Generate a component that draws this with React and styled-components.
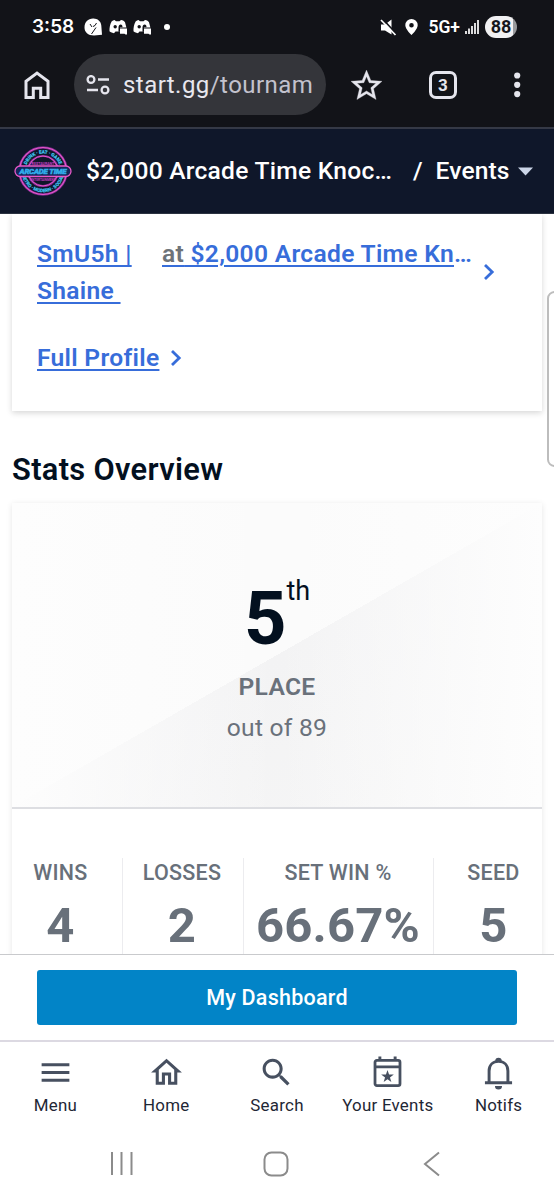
import styled, { createGlobalStyle } from "styled-components";

const GlobalStyle = createGlobalStyle`
  * {
    box-sizing: border-box;
  }
  body {
    margin: 0;
    background: #fff;
    font-family: Roboto, "Liberation Sans", sans-serif;
  }
`

const Phone = styled.div`
  width: 554px;
  height: 1200px;
  display: flex;
  flex-direction: column;
  overflow: hidden;
  background: #fff;
  svg {
    display: block;
    flex-shrink: 0;
  }
`

/* ---- phone status bar ---- */

const StatusBar = styled.div`
  height: 54px;
  padding: 0 37px 0 32px;
  display: flex;
  align-items: center;
  background: #121318;
  color: #fff;
`

const Clock = styled.span`
  width: 52px;
  font: 600 19px/24px Inter, sans-serif;
`

const StatusIcons = styled.div`
  display: flex;
  align-items: center;
  gap: 6.5px;
  flex-grow: 1;
`

const Dot = styled.span`
  width: 6px;
  height: 6px;
  margin-left: 6.5px;
  border-radius: 50%;
  background: #fff;
`

const Network = styled.span`
  margin: 0 5px 0 7px;
  font: 600 17.5px/22px Roboto, sans-serif;
`

const Battery = styled.span`
  width: 32px;
  height: 22px;
  margin-left: 6px;
  border-radius: 11px;
  background: linear-gradient(90deg, #f1f1f3 88%, #98999c 88%);
  color: #16171c;
  font: 700 18px/22px Roboto, sans-serif;
  text-align: center;
`

/* ---- browser toolbar ---- */

const Toolbar = styled.div`
  height: 75px;
  padding: 0 0 12px 23px;
  display: flex;
  align-items: center;
  background: #121318;
  border-bottom: 2px solid #353946;
`

const Address = styled.div`
  width: 252px;
  height: 61px;
  margin: 0 25px 0 23px;
  padding: 0 12px;
  display: flex;
  align-items: center;
  gap: 13px;
  border-radius: 31px;
  background: #34353a;
`

const Url = styled.div`
  flex: 1;
  overflow: hidden;
  white-space: nowrap;
  color: #c3c2cd;
  font-size: 24px;
  line-height: 32px;
  letter-spacing: 0.45px;
  > span {
    color: #e8e7ee;
  }
`

const TabCount = styled.div`
  width: 28px;
  height: 28px;
  margin: 0 57px 0 47px;
  border: 3px solid #e5e5ed;
  border-radius: 7px;
  color: #e5e5ed;
  font: 700 17px/22px Roboto, sans-serif;
  text-align: center;
`

/* ---- tournament header ---- */

const Header = styled.header`
  height: 85px;
  padding: 0 20px 0 14px;
  display: flex;
  align-items: center;
  background: #0f172a;
  border-bottom: 1px solid #2b3240;
  color: #fff;
  font-size: 24.6px;
  font-weight: 500;
  line-height: 36px;
`

const Tournament = styled.div`
  width: 309px;
  margin: 0 18px 0 14px;
  letter-spacing: 0.25px;
  white-space: nowrap;
`

const EventsMenu = styled.div`
  margin-left: 13px;
  display: flex;
  align-items: center;
  gap: 8px;
  letter-spacing: 0.1px;
`

/* ---- page ---- */

const Content = styled.main`
  flex: 1;
  min-height: 0;
  padding: 0 12px;
  position: relative;
  overflow: hidden;
`

const ProfileCard = styled.section`
  height: 197px;
  padding: 21px 25px 0;
  box-shadow: 0 2px 6px rgba(0, 0, 0, 0.16);
  color: #376dda;
  font-size: 24.6px;
  font-weight: 600;
  line-height: 37px;
  letter-spacing: 0.3px;
`

const ProfileRow = styled.div`
  display: flex;
  align-items: flex-start;
`

const ProfileLink = styled.a`
  color: #376dda;
  text-decoration: underline;
  text-decoration-thickness: 2px;
  text-underline-offset: 3px;
  white-space: pre;
`

const PlayerName = styled(ProfileLink)`
  width: 125px;
`

const AtTournament = styled(ProfileLink)`
  width: 310px;
  margin-right: 11px;
  > span {
    color: #6e7378;
  }
  > i {
    display: inline-block;
    font-style: normal;
    text-decoration: none;
  }
`

const RowArrow = styled.div`
  padding-top: 28px;
`

const FullProfile = styled.div`
  margin-top: 30px;
  display: flex;
  align-items: center;
  gap: 11px;
`

const EdgeHandle = styled.div`
  position: absolute;
  top: 77px;
  right: -8px;
  width: 15px;
  height: 176px;
  border: 2px solid #bdbdbd;
  border-radius: 8px;
  background: #fff;
`

const SectionTitle = styled.h2`
  margin: 40px 0 14px;
  color: #03101f;
  font-size: 30.8px;
  font-weight: 600;
  line-height: 38px;
  letter-spacing: 0.33px;
`

const StatsCard = styled.section`
  height: 600px;
  box-shadow: 0 1px 6px rgba(0, 0, 0, 0.1);
`

const Placement = styled.div`
  height: 306px;
  padding-top: 71px;
  display: flex;
  flex-direction: column;
  align-items: center;
  border-bottom: 2px solid #dddee2;
  color: #6a717b;
  background:
    linear-gradient(90deg, rgba(253, 253, 253, 1), rgba(253, 253, 253, 0) 50%, rgba(253, 253, 253, 1)),
    linear-gradient(to bottom right, #fbfbfb 50%, #f3f3f4 50%, #f6f6f6);
`

const Rank = styled.div`
  display: flex;
  align-items: flex-start;
  color: #03101f;
  font-size: 74px;
  font-weight: 700;
  line-height: 90px;
  > sup {
    font-size: 27px;
    font-weight: 400;
    line-height: 34px;
  }
`

const PlaceLabel = styled.div`
  margin-top: 6px;
  font-size: 24.6px;
  font-weight: 600;
  line-height: 34px;
  letter-spacing: 0.3px;
`

const OutOf = styled.div`
  margin-top: 7px;
  font-size: 24.6px;
  line-height: 34px;
  letter-spacing: 0.25px;
`

const Stats = styled.div`
  height: 160px;
  margin-top: 49px;
  display: grid;
  grid-template-columns: 111px 121px 190px 1fr;
`

const Stat = styled.div`
  padding-left: ${(props) => props.$padLeft || 0}px;
  padding-right: ${(props) => props.$padRight || 0}px;
  border-right: ${(props) => (props.$last ? "none" : "1px solid #ececef")};
  color: #68707a;
  text-align: center;
  white-space: nowrap;
`

const StatLabel = styled.div`
  font-size: 21.5px;
  font-weight: 500;
  line-height: 30px;
  letter-spacing: 0.25px;
`

const StatValue = styled.div`
  margin-top: 8px;
  font-size: 49px;
  font-weight: 700;
  line-height: 60px;
  letter-spacing: 0.2px;
`

/* ---- bottom bars ---- */

const DashboardBar = styled.div`
  height: 86px;
  padding: 15px 37px 0;
  border-top: 1px solid #c9cacd;
`

const DashboardButton = styled.button`
  width: 100%;
  height: 55px;
  padding: 0;
  border: none;
  border-radius: 3px;
  background: #0284c7;
  color: #fff;
  font: 500 21.5px/54px Roboto, sans-serif;
  letter-spacing: 0.25px;
`

const TabBar = styled.nav`
  height: 88px;
  display: grid;
  grid-template-columns: repeat(5, 1fr);
  border-top: 2px solid #dcd9e2;
`

const Tab = styled.div`
  padding-top: 12px;
  display: flex;
  flex-direction: column;
  align-items: center;
  color: #475060;
  > span {
    margin-top: 2px;
    color: #1f2735;
    font-size: 16.9px;
    line-height: 24px;
    letter-spacing: 0.25px;
    white-space: nowrap;
  }
`

const SystemNav = styled.div`
  height: 72px;
  padding: 0 113px 1px 109px;
  display: flex;
  align-items: center;
  justify-content: space-between;
`

const Chevron = () => (
  <svg width="12" height="18" viewBox="0 0 12 18" fill="none" stroke="#376dda" strokeWidth="2.8">
    <path d="M2 2l7.2 7L2 16" />
  </svg>
)

const ChatIcon = () => (
  <svg width="18" height="18" viewBox="0 0 18 18">
    <path d="M9 .5C13 .2 17 3 17.3 7.5L18 16.8l-8 .7C4 17.5.5 14 .5 9.5.5 4 4 .7 9 .5z" fill="#fff" />
    <path d="M6 6l2 3M12.500 5l-1.500 2.500M12 9.500L7.500 16M9 8.500l2-1" stroke="#121318" strokeWidth="1" fill="none" />
  </svg>
)

const DiscordIcon = () => (
  <svg width="18" height="16" viewBox="0 0 18 16">
    <path d="M5.5 1L7 2.2h3.5L12 1c2 .3 3.3 1 4 2.2l1.4 5.3H11v4H6.5L5 14.3C2.500 13.800 1 12.700.500 12.300.300 9 1 5.500 2.600 2.500 3.500 1.600 4.500 1.100 5.500 1z" fill="#fff" />
    <circle cx="6.200" cy="7.700" r="1.700" fill="#121318" />
    <path d="M9.500 8.500c0-2 1-3 2.200-3s1.800 1 1.800 2.700H11v4.500H9.500z" fill="#121318" />
    <path d="M11 9.500h7v6h-1.500l-1-.8H11z" fill="#fff" />
  </svg>
)

const ArcadeLogo = () => (
  <svg width="58" height="52" viewBox="0 0 58 52" fill="none">
    <circle cx="29" cy="26" r="23.500" stroke="#7b2a8e" strokeWidth="2.600" />
    <circle cx="29" cy="26" r="23.500" stroke="#e858c8" strokeWidth="1.100" />
    <circle cx="29" cy="26" r="15" stroke="#7b2a8e" strokeWidth="2.200" />
    <circle cx="29" cy="26" r="15" stroke="#e858c8" strokeWidth="1" />
    <path id="arcTop" d="M11.500 26a17.500 17.500 0 0 1 35 0" />
    <path id="arcBottom" d="M7.800 26a21.200 21.200 0 0 0 42.400 0" />
    <g fill="#3fc1ee" fontFamily="Roboto, sans-serif" fontWeight="700" textAnchor="middle">
      <g stroke="#3fc1ee" strokeWidth=".25" fontSize="4.600">
        <text><textPath href="#arcTop" startOffset="50%">DRINK · EAT · GAME</textPath></text>
        <text><textPath href="#arcBottom" startOffset="50%">RETRO · MODERN · SOCIAL</textPath></text>
      </g>
      <g fill="#c33fc6">
        <text x="29" y="20" fontSize="3.600">RESTAURANT</text>
        <text x="29" y="35.500" fontSize="3.200">ENTERTAINMENT</text>
      </g>
      <rect x="1" y="21" width="56" height="10.500" rx="5.200" fill="#14275a" stroke="#e858c8" strokeWidth="1.300" />
      <text x="29" y="29" fontSize="7.800" stroke="#2fa9ea" strokeWidth=".6" textLength="47" fontStyle="italic">ARCADE TIME</text>
    </g>
  </svg>
)

const stats = [
  { label: "WINS", value: "4", padRight: 13 },
  { label: "LOSSES", value: "2", padRight: 2 },
  { label: "SET WIN %", value: "66.67%", padRight: 1 },
  { label: "SEED", value: "5", padLeft: 11 },
]

const tabs = [
  {
    label: "Menu",
    icon: <path d="M3 18h18v-2H3v2zm0-5h18v-2H3v2zm0-7v2h18V6H3z" />,
  },
  {
    label: "Home",
    icon: <path d="M12 5.690l5 4.500V18h-2v-6H9v6H7v-7.810l5-4.500M12 3L2 12h3v8h6v-6h2v6h6v-8h3L12 3z" />,
  },
  {
    label: "Search",
    icon: <path d="M15.500 14h-.79l-.28-.27C15.410 12.590 16 11.110 16 9.500 16 5.910 13.090 3 9.500 3S3 5.910 3 9.500 5.910 16 9.500 16c1.610 0 3.090-.59 4.230-1.570l.27.28v.79l5 4.990L20.490 19l-4.990-5zm-6 0C7.010 14 5 11.990 5 9.500S7.010 5 9.500 5 14 7.010 14 9.500 11.990 14 9.500 14z" />,
  },
  {
    label: "Your Events",
    icon: (
      <>
        <rect x="3.900" y="4.100" width="16.200" height="16.400" rx="1.200" fill="none" stroke="currentColor" strokeWidth="1.800" />
        <path d="M6.100 1.600H8V4.500H6.100zM16 1.600h1.900V4.500H16zM4 7.400h16v1.800H4zM12 10.400l1 2.900h3.100l-2.500 1.900.9 3-2.500-1.800-2.500 1.800.9-3-2.500-1.900H11z" />
      </>
    ),
  },
  {
    label: "Notifs",
    icon: (
      <>
        <path d="M5.900 18.500v-7.500C5.900 7.200 8.400 4.800 12 4.800s6.100 2.400 6.100 6.200v7.500M3.200 18.700h17.600" fill="none" stroke="currentColor" strokeWidth="1.900" />
        <path d="M9.900 4.600a2.100 2.100 0 0 1 4.200 0zM9.700 20.700h4.600a2.300 2.300 0 0 1-4.600 0z" />
      </>
    ),
  },
]

const App = () => {
  return (
    <Phone>
      <GlobalStyle />
      <StatusBar>
        <Clock>3:58</Clock>
        <StatusIcons>
          <ChatIcon />
          <DiscordIcon />
          <DiscordIcon />
          <Dot />
        </StatusIcons>
        <svg width="17" height="17" viewBox="0 0 17 17" fill="none">
          <path d="M1 5.500h4L11.500.5v15L5 11.500H1z" fill="#fff" />
          <path d="M3 .5l14.500 15.500" stroke="#121318" strokeWidth="1.800" />
          <path d="M1 1l14.500 15" stroke="#fff" strokeWidth="1.700" />
        </svg>
        <svg width="24" height="16" viewBox="-8 0 24 16">
          <path d="M6.500 0a6.200 6.200 0 0 1 6.200 6.200c0 4-6.200 9.800-6.200 9.800S.3 10.200.3 6.200A6.200 6.200 0 0 1 6.500 0zm0 4a2.300 2.300 0 1 0 0 4.600 2.300 2.300 0 0 0 0-4.600z" fill="#fff" fillRule="evenodd" />
        </svg>
        <Network>5G+</Network>
        <svg width="14" height="16" viewBox="0 0 14 16" stroke="#fff" strokeWidth="1.700">
          <path d="M1 12v3M4 9.500V15M7 7v8M10 4v11M13 1v14" />
        </svg>
        <Battery>88</Battery>
      </StatusBar>

      <Toolbar>
        <svg width="28" height="30" viewBox="0 0 28 30" fill="none" stroke="#e5e5ed" strokeWidth="3">
          <path d="M3 27.500V11.200L14 3l11 8.200v16.300h-7.300v-9.300h-7.400v9.300z" />
        </svg>
        <Address>
          <svg width="24" height="20" viewBox="0 0 24 20" fill="none" stroke="#e5e5ed" strokeWidth="2.300">
            <circle cx="5" cy="4.500" r="3.400" />
            <circle cx="19" cy="15" r="3.400" />
            <path d="M12 4.500h11M1 15h11" />
          </svg>
          <Url><span>start.gg</span>/tourname</Url>
        </Address>
        <svg width="31" height="30" viewBox="2 2 20 19.2" fill="#e5e5ed" stroke="#e5e5ed" strokeWidth=".2">
          <path d="M22 9.240l-7.190-.62L12 2 9.190 8.630 2 9.240l5.460 4.730L5.820 21 12 17.270 18.180 21l-1.630-7.030L22 9.240zM12 15.400l-3.760 2.270 1-4.280-3.320-2.880 4.380-.38L12 6.100l1.710 4.040 4.380.38-3.320 2.880 1 4.280L12 15.400z" />
        </svg>
        <TabCount>3</TabCount>
        <svg width="7" height="28" viewBox="0 0 7 28" fill="#e5e5ed">
          <circle cx="3.200" cy="4.500" r="3.100" />
          <circle cx="3.200" cy="13.800" r="3.100" />
          <circle cx="3.200" cy="23.100" r="3.100" />
        </svg>
      </Toolbar>

      <Header>
        <ArcadeLogo />
        <Tournament>$2,000 Arcade Time Knoc…</Tournament>
        <span>/</span>
        <EventsMenu>
          Events
          <svg width="15" height="9" viewBox="0 0 15 9">
            <path d="M0 .5h15L7.500 8.500z" fill="#cbd5e8" />
          </svg>
        </EventsMenu>
      </Header>

      <Content>
        <ProfileCard>
          <ProfileRow>
            <PlayerName>{"SmU5h |\nShaine "}</PlayerName>
            <AtTournament><span>at</span> $2,000 Arcade Time Kn<i>…</i></AtTournament>
            <RowArrow><Chevron /></RowArrow>
          </ProfileRow>
          <FullProfile>
            <ProfileLink>Full Profile</ProfileLink>
            <Chevron />
          </FullProfile>
        </ProfileCard>
        <EdgeHandle />

        <SectionTitle>Stats Overview</SectionTitle>
        <StatsCard>
          <Placement>
            <Rank>5<sup>th</sup></Rank>
            <PlaceLabel>PLACE</PlaceLabel>
            <OutOf>out of 89</OutOf>
          </Placement>
          <Stats>
            {stats.map((stat, i) => (
              <Stat
                key={stat.label}
                $padLeft={stat.padLeft}
                $padRight={stat.padRight}
                $last={i === stats.length - 1}
              >
                <StatLabel>{stat.label}</StatLabel>
                <StatValue>{stat.value}</StatValue>
              </Stat>
            ))}
          </Stats>
        </StatsCard>
      </Content>

      <DashboardBar>
        <DashboardButton>My Dashboard</DashboardButton>
      </DashboardBar>
      <TabBar>
        {tabs.map((tab) => (
          <Tab key={tab.label}>
            <svg width="37" height="37" viewBox="0 0 24 24" fill="currentColor">{tab.icon}</svg>
            <span>{tab.label}</span>
          </Tab>
        ))}
      </TabBar>
      <SystemNav>
        <svg width="24" height="24" viewBox="0 0 24 24" stroke="#8b8b8b" strokeWidth="2">
          <path d="M3 0v23M12.500 0v23M22.500 0v23" />
        </svg>
        <svg width="31" height="26" viewBox="0 0 31 26" fill="none" stroke="#8b8b8b" strokeWidth="2">
          <rect x="1.500" y="1.500" width="23" height="23" rx="7" />
        </svg>
        <svg width="18" height="26" viewBox="0 0 18 26" fill="none" stroke="#8b8b8b" strokeWidth="2">
          <path d="M16 1.500L2 13l14 11.500" />
        </svg>
      </SystemNav>
    </Phone>
  );
}

export default App;
